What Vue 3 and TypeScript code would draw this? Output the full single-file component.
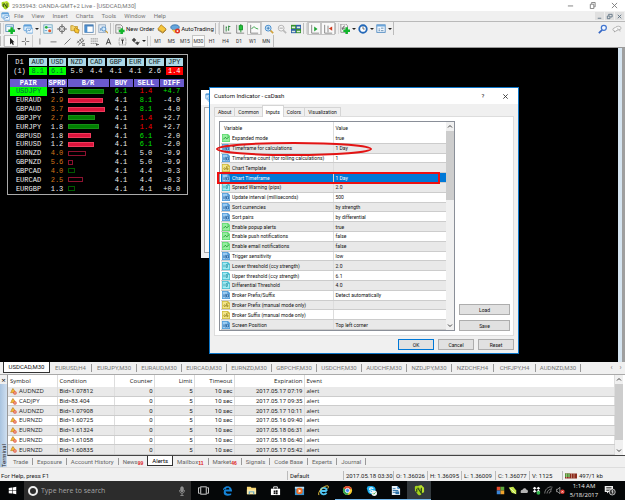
<script setup lang="ts">
import { ref } from 'vue'

interface Strength { code: string; value: string; tone: string }
interface Pair { name: string; spread: string; warn: boolean; bar: number; kind: string; buy: string; sell: string; diff: string; buyTone: string; sellTone: string; diffTone: string }
interface Param { kind: string; name: string; value: string }

const menu = ['File', 'View', 'Insert', 'Charts', 'Tools', 'Window', 'Help']
const frames = ['M1', 'M5', 'M15', 'M30', 'H1', 'H4', 'D1', 'W1', 'MN']
const frame = ref('M30')

const strengths: Strength[] = [
  { code: 'AUD', value: '8.1', tone: 'up' },
  { code: 'USD', value: '6.1', tone: 'up' },
  { code: 'NZD', value: '5.0', tone: '' },
  { code: 'CAD', value: '4.4', tone: '' },
  { code: 'GBP', value: '4.1', tone: '' },
  { code: 'EUR', value: '4.1', tone: '' },
  { code: 'CHF', value: '2.6', tone: '' },
  { code: 'JPY', value: '1.4', tone: 'down' },
]

const pair = (name: string, spread: string, warn: boolean, bar: number, kind: string, buy: string, sell: string, diff: string, buyTone = '', sellTone = '', diffTone = ''): Pair =>
  ({ name, spread, warn, bar, kind, buy, sell, diff, buyTone, sellTone, diffTone })

const pairs: Pair[] = [
  pair('USDJPY', '1.3', false, 36, 'green', '6.1', '1.4', '+4.7', 'g', 'r', 'g'),
  pair('EURAUD', '2.9', true, 35, 'red', '4.1', '8.1', '-4.0', '', 'g'),
  pair('GBPAUD', '3.7', true, 37, 'red', '4.1', '8.1', '-4.0', '', 'g'),
  pair('GBPJPY', '2.7', true, 27, 'green', '4.1', '1.4', '+2.7', '', 'r'),
  pair('EURJPY', '1.8', false, 31, 'green', '4.1', '1.4', '+2.7', '', 'r'),
  pair('GBPUSD', '1.8', false, 23, 'red', '4.1', '6.1', '-2.0', '', 'g'),
  pair('EURUSD', '1.2', false, 26, 'red', '4.1', '6.1', '-2.0', '', 'g'),
  pair('EURNZD', '4.0', true, 18, 'red hollow', '4.1', '5.0', '-0.9'),
  pair('GBPNZD', '5.6', true, 5, 'red hollow', '4.1', '5.0', '-0.9'),
  pair('GBPCAD', '4.0', true, 7, 'green hollow', '4.1', '4.4', '-0.3'),
  pair('EURCAD', '2.5', true, 15, 'red hollow', '4.1', '4.4', '-0.3'),
  pair('EURGBP', '1.3', false, 7, 'green hollow', '4.1', '4.1', '+0.0'),
]

const dialogTabs = ['About', 'Common', 'Inputs', 'Colors', 'Visualization']
const dialogTab = ref('Inputs')

const params: Param[] = [
  { kind: 'bool', name: 'Expanded mode', value: 'true' },
  { kind: 'int', name: 'Timeframe for calculations', value: '1 Day' },
  { kind: 'int', name: 'Timeframe count (for rolling calculations)', value: '1' },
  { kind: 'str', name: 'Chart Template', value: '' },
  { kind: 'int', name: 'Chart Timeframe', value: '1 Day' },
  { kind: 'real', name: 'Spread Warning (pips)', value: '2.0' },
  { kind: 'int', name: 'Update interval (milliseconds)', value: '500' },
  { kind: 'int', name: 'Sort currencies', value: 'by strength' },
  { kind: 'int', name: 'Sort pairs', value: 'by differential' },
  { kind: 'bool', name: 'Enable popup alerts', value: 'true' },
  { kind: 'bool', name: 'Enable push notifications', value: 'false' },
  { kind: 'bool', name: 'Enable email notifications', value: 'false' },
  { kind: 'int', name: 'Trigger sensitivity', value: 'low' },
  { kind: 'real', name: 'Lower threshold (ccy strength)', value: '2.0' },
  { kind: 'real', name: 'Upper threshold (ccy strength)', value: '6.1' },
  { kind: 'real', name: 'Differential Threshold', value: '4.0' },
  { kind: 'int', name: 'Broker Prefix/Suffix', value: 'Detect automatically' },
  { kind: 'str', name: 'Broker Prefix (manual mode only)', value: '' },
  { kind: 'str', name: 'Broker Suffix (manual mode only)', value: '' },
  { kind: 'int', name: 'Screen Position', value: 'Top left corner' },
]
const selected = ref('Chart Timeframe')

const charts = ['USDCAD,M30', 'EURUSD,H4', 'EURJPY,M30', 'EURAUD,M30', 'EURCAD,M30', 'EURNZD,M30', 'GBPCHF,M30', 'USDCHF,M30', 'AUDCHF,M30', 'NZDJPY,M30', 'NZDCHF,H4', 'CHFJPY,H4', 'AUDNZD,M30']
const chart = ref('USDCAD,M30')

const alerts = [
  ['AUDNZD', 'Bid>1.07812', '2017.05.17 07:19'],
  ['CADJPY', 'Bid>83.404', '2017.05.17 09:35'],
  ['AUDNZD', 'Bid>1.07908', '2017.05.17 10:11'],
  ['EURNZD', 'Bid>1.60725', '2017.05.16 09:40'],
  ['EURNZD', 'Bid>1.61324', '2017.05.18 06:31'],
  ['EURNZD', 'Bid>1.61058', '2017.05.18 06:40'],
  ['EURNZD', 'Bid>1.60835', '2017.05.17 05:42'],
]

const panes = [
  { name: 'Trade', count: '' }, { name: 'Exposure', count: '' }, { name: 'Account History', count: '' },
  { name: 'News', count: '99' }, { name: 'Alerts', count: '' }, { name: 'Mailbox', count: '11' },
  { name: 'Market', count: '46' }, { name: 'Signals', count: '' }, { name: 'Code Base', count: '' },
  { name: 'Experts', count: '' }, { name: 'Journal', count: '' },
]
const pane = ref('Alerts')
const query = ref('')

const watchTools = ['market', 'target', 'folder', 'navigator', 'tester']
const drawTools = ['vline', 'hline', 'trend', 'channel', 'fibo', 'text', 'label']
const apps = ['edge', 'explorer', 'store', 'player', 'ie', 'chrome', 'skype', 'writer', 'oanda']
const tray = ['flag', 'leaf', 'cloud', 'dropbox', 'wifi', 'mute']
</script>

<template>
  <div class="screen">
    <svg class="defs" aria-hidden="true">
      <symbol id="oanda" viewBox="0 0 12 12"><path d="M1 8V4L4 1l4 5v3l3-1V3L8 0 1 2z" fill="#b8e02c" /><path d="M1 2c2-2 3-1 4 0l4 6c-1 4-3 4-5 2L1 6z" fill="#a4d41c" /><path d="M3 4v4M4 3l4 6V3" fill="none" stroke="#2e4716" stroke-width="1.3" /></symbol>
      <symbol id="chartwin" viewBox="0 0 12 12"><rect x="1" y="1" width="9" height="7" rx="1" fill="#d8ecfc" stroke="#5e9fd8" /><path d="M1 2h9" stroke="#5e9fd8" stroke-width="2" /><rect x="4" y="5" width="8" height="6" rx="1" fill="#eef7ff" stroke="#5e9fd8" /><path d="M5 9l2-2 1 1 2-2" fill="none" stroke="#3473b5" /></symbol>
      <symbol id="newchart" viewBox="0 0 12 12"><rect x="1" y="1" width="9" height="8" fill="#f4fbff" stroke="#4f86b5" /><path d="M2 3h7" stroke="#7ab3dd" /><path d="M8 4v8M4 8h8" stroke="#11b62b" stroke-width="3" /></symbol>
      <symbol id="market" viewBox="0 0 12 12"><rect x="1" y="1" width="10" height="10" fill="#eef7fb" stroke="#6aa3bd" /><circle cx="4" cy="4" r="1.700" fill="#27ae3e" /><circle cx="8" cy="8" r="1.800" fill="#e2572b" /><path d="M6 4h4M2 8h3" stroke="#4b91c8" /></symbol>
      <symbol id="target" viewBox="0 0 12 12"><circle cx="6" cy="6" r="3.500" fill="none" stroke="#555" /><path d="M6 0v5M6 7v5M0 6h5M7 6h5" stroke="#555" /></symbol>
      <symbol id="folder" viewBox="0 0 12 12"><path d="M1 2h3l1 1h4v5H1z" fill="#f3d269" stroke="#c39a2f" /><path d="M5 6l2-2 1 2 3 1-1 4-4-1z" fill="#f7c531" stroke="#b8871c" /></symbol>
      <symbol id="navigator" viewBox="0 0 12 12"><rect x="1" y="1" width="10" height="9" fill="#fff" stroke="#4a7fb5" /><path d="M1 2h10" stroke="#4a7fb5" stroke-width="2" /><rect x="1" y="2" width="3" height="8" fill="#4d8fd0" /></symbol>
      <symbol id="tester" viewBox="0 0 12 12"><rect x="1" y="1" width="8" height="9" fill="#e6eef6" stroke="#8aa3bd" /><path d="M3 8V5M5 8V3" stroke="#6d93bd" /><circle cx="7" cy="6" r="2.500" fill="#d3ebfa" stroke="#4486c6" /><path d="M9 8l3 3" stroke="#c99a35" stroke-width="1.500" /></symbol>
      <symbol id="order" viewBox="0 0 12 12"><path d="M1 1h6l2 2v8H1z" fill="#f5f5f5" stroke="#777" /><path d="M3 4h4M3 6h3" stroke="#888" /><path d="M8 5v7M4.500 8.500h7" stroke="#12b52c" stroke-width="3" /></symbol>
      <symbol id="gold" viewBox="0 0 12 12"><path d="M1 6l4-5 6 5-4 4z" fill="#f6c63c" stroke="#b5831d" /><path d="M1 7l6 4 4-4" fill="none" stroke="#9d6f16" /></symbol>
      <symbol id="auto" viewBox="0 0 12 12"><ellipse cx="6" cy="4" rx="5" ry="3" fill="#64a6dd" stroke="#3470a8" /><path d="M2 7l4 4 4-4z" fill="#f0c340" /><circle cx="9" cy="8.500" r="3" fill="#e02e20" /><path d="M8 7.500h2v2H8z" fill="#fff" /></symbol>
      <symbol id="bars" viewBox="0 0 12 12"><path d="M2 1v10h9" fill="none" stroke="#777" /><path d="M5 3v6M8 2v6" stroke="#177d2a" /><path d="M5 4h1M8 3h2M7 7h1" stroke="#177d2a" /></symbol>
      <symbol id="candles" viewBox="0 0 12 12"><path d="M2 1v10h9" fill="none" stroke="#777" /><path d="M7 0v10" stroke="#0c8d20" /><rect x="5" y="2" width="4" height="5" fill="#22c23a" stroke="#0c8d20" /></symbol>
      <symbol id="line" viewBox="0 0 12 12"><path d="M2 1v10h9" fill="none" stroke="#777" /><path d="M3 6c2-3 4-3 5-1l3 1" fill="none" stroke="#1d9a31" /></symbol>
      <symbol id="zoomin" viewBox="0 0 12 12"><path d="M7 7l4 4" stroke="#d1a23b" stroke-width="2" /><circle cx="5" cy="5" r="3.500" fill="#d9f0ff" stroke="#2f7cc4" /><path d="M3 5h4M5 3v4" stroke="#2a6dad" /></symbol>
      <symbol id="zoomout" viewBox="0 0 12 12"><path d="M7 7l4 4" stroke="#bbb" stroke-width="2" /><circle cx="5" cy="5" r="3.500" fill="#f4f4f4" stroke="#aaa" /><path d="M3 5h4" stroke="#999" /></symbol>
      <symbol id="tile" viewBox="0 0 12 12"><rect x="0" y="1" width="6" height="5" fill="#35912f" /><rect x="6" y="1" width="6" height="5" fill="#2d5fa6" /><rect x="0" y="6" width="6" height="5" fill="#2d5fa6" /><rect x="6" y="6" width="6" height="5" fill="#35912f" /><path d="M1 4h4M7 4h4M1 9h4M7 9h4" stroke="#dfeedd" stroke-width="2" /></symbol>
      <symbol id="scroll" viewBox="0 0 12 12"><path d="M2 1v10h9" fill="none" stroke="#777" /><path d="M5 3l4 3-4 3z" fill="#1fa534" /></symbol>
      <symbol id="shift" viewBox="0 0 12 12"><path d="M2 1v10h9M6 2v8" fill="none" stroke="#777" /><path d="M11 3L7 5.500 11 8z" fill="#d13a1e" /></symbol>
      <symbol id="indicator" viewBox="0 0 12 12"><path d="M1 0h6l2 2v8H1z" fill="#f4f4f4" stroke="#888" /><path d="M3 7c1-5 2-5 3-4M2 5h4" fill="none" stroke="#555" /><path d="M8 4v8M4 8h8" stroke="#12b52c" stroke-width="3" /></symbol>
      <symbol id="clock" viewBox="0 0 12 12"><circle cx="6" cy="6" r="4.500" fill="#fff" stroke="#2368b8" stroke-width="2.200" /><path d="M6 3v3h2" fill="none" stroke="#555" /></symbol>
      <symbol id="template" viewBox="0 0 12 12"><rect x="1" y="1" width="10" height="9" fill="#f1f8ff" stroke="#4684bf" /><path d="M1 2h10" stroke="#69a5da" stroke-width="2" /><path d="M3 6h2M6 5h3M3 8h2M6 8h3" stroke="#567fa5" /></symbol>
      <symbol id="cursor" viewBox="0 0 12 12"><path d="M4 1v9l2-2 2 3 1-1-1-3h2z" fill="#222" /></symbol>
      <symbol id="cross" viewBox="0 0 12 12"><path d="M6 1v4M6 7v4M1 6h4M7 6h4" stroke="#555" /></symbol>
      <symbol id="vline" viewBox="0 0 12 12"><path d="M6.500 2v8" stroke="#666" /></symbol>
      <symbol id="hline" viewBox="0 0 12 12"><path d="M2 6.500h8" stroke="#555" /></symbol>
      <symbol id="trend" viewBox="0 0 12 12"><path d="M2 10l8-8" stroke="#555" /></symbol>
      <symbol id="channel" viewBox="0 0 12 12"><path d="M1 8l7-6M3 11l8-7M2 5l3 4M5 3l3 5M8 1l2 5" stroke="#555" stroke-width=".9" /><path d="M8 9h4M8 11h4" stroke="#444" /></symbol>
      <symbol id="fibo" viewBox="0 0 12 12"><path d="M1 2.500h10M1 5.500h10M1 8.500h7" stroke="#777" stroke-dasharray="2 .5" /><path d="M9 8v4M8 10h4" stroke="#444" /></symbol>
      <symbol id="text" viewBox="0 0 12 12"><path d="M3 10l3-8 3 8M4 7.500h4" fill="none" stroke="#444" stroke-width="1.300" /></symbol>
      <symbol id="label" viewBox="0 0 12 12"><rect x="1.500" y="1.500" width="9" height="9" fill="none" stroke="#666" stroke-dasharray="1 1" /><path d="M4 4h4M6 4v5" stroke="#333" stroke-width="1.300" /></symbol>
      <symbol id="arrows" viewBox="0 0 12 12"><path d="M1 4l3-3 3 3-3 3zM6 8l2-2 2 1 2-1-3 5z" fill="#444" /><path d="M4 6l4 4" stroke="#444" /></symbol>
      <symbol id="find" viewBox="0 0 12 12"><path d="M5 7l-4 4" stroke="#3566c4" stroke-width="2" /><circle cx="7" cy="4.500" r="3" fill="#f2f7ff" stroke="#4175cf" stroke-width="1.500" /></symbol>
      <symbol id="chat" viewBox="0 0 16 12"><ellipse cx="10" cy="4.500" rx="4.500" ry="3" fill="#f4f4f4" stroke="#999" /><path d="M5 4c-4 0-5 5-1 5v2l2-2c4 0 4-3 3-4" fill="#fafafa" stroke="#888" /><path d="M12 7l1 3" stroke="#999" /></symbol>
      <symbol id="bell" viewBox="0 0 12 12"><path d="M1 8c2-1 1-6 4-6s3 4 4 6z" fill="#f2b632" stroke="#b97d19" /><circle cx="5" cy="1.500" r="1" fill="#c98b20" /><circle cx="8.500" cy="8.500" r="3" fill="#e2553a" /><path d="M7 8.500h3" stroke="#fff" stroke-width="1.200" /></symbol>
      <symbol id="bool" viewBox="0 0 12 12"><path d="M0 0h9l3 3v9H0z" fill="#5fd970" /><path d="M1 1h7v3h3v7H1z" fill="#95ef9f" /><path d="M2 8l3-3 2 2 3-2" fill="none" stroke="#178a2b" stroke-width="1.300" /></symbol>
      <symbol id="int" viewBox="0 0 12 12"><path d="M0 0h9l3 3v9H0z" fill="#4e9ad8" /><path d="M1 1h7v3h3v7H1z" fill="#9dcdf3" /><path d="M3 5v4M5 5h1.500v4H5M8 5h1.500v4H8M5 7h1.500" fill="none" stroke="#14508f" stroke-width="1.200" /></symbol>
      <symbol id="real" viewBox="0 0 12 12"><path d="M0 0h9l3 3v9H0z" fill="#43bccf" /><path d="M1 1h7v3h3v7H1z" fill="#a2ecf4" /><path d="M3 4v4M6 4h2v4H6z" fill="none" stroke="#1b8494" /></symbol>
      <symbol id="str" viewBox="0 0 12 12"><path d="M0 0h9l3 3v9H0z" fill="#cdb83a" /><path d="M1 1h7v3h3v7H1z" fill="#f3e68a" /><circle cx="4" cy="7" r="1.300" fill="none" stroke="#8a760f" /><path d="M7 3v5M7 6h2v2.500H7" fill="none" stroke="#8a760f" /></symbol>
      <symbol id="windows" viewBox="0 0 12 12"><path d="M1 2.500L5.500 2v3.600H1zM6.200 1.900L11 1v4.600H6.200zM1 6.300h4.500V10L1 9.500zM6.200 6.300H11V11l-4.800-.9z" fill="#fff" /></symbol>
      <symbol id="mic" viewBox="0 0 12 12"><rect x="4.500" y="1" width="3" height="6" rx="1.500" fill="#888" stroke="#999" /><path d="M3 5c0 5 6 5 6 0M6 9v2.500M4 11.500h4" fill="none" stroke="#999" /></symbol>
      <symbol id="taskview" viewBox="0 0 12 12"><rect x="3" y="2" width="6" height="8" fill="none" stroke="#ddd" /><path d="M2 3H.5v6H2M10 3h1.500v6H10" fill="none" stroke="#ddd" /></symbol>
      <symbol id="edge" viewBox="0 0 12 12"><path d="M1 6c0-6 10-7 10 1H4c0 3 4 3 6 2v2C5 13 1 11 2 7c0-2 2-3 3-3-3 0-4 2-4 2zm3-1h4c0-3-4-2-4 0z" fill="#1584d8" /></symbol>
      <symbol id="explorer" viewBox="0 0 12 12"><path d="M1 2h4l1 1h5v7H1z" fill="#f7d774" /><path d="M1 5h10v5H1z" fill="#fbe9a8" /><path d="M3 10V7h6v3H8V8H4v2z" fill="#3d97cf" /></symbol>
      <symbol id="store" viewBox="0 0 12 12"><path d="M1 4h10v7H1z" fill="#fff" /><path d="M4 4V2h4v2" fill="none" stroke="#fff" /><path d="M4 6h1.800v1.600H4zM6.300 5.800H8.300v1.800h-2zM4 8h1.800v1.700H4zM6.300 8h2v2h-2z" fill="#111" /></symbol>
      <symbol id="player" viewBox="0 0 12 12"><rect x="1" y="2" width="10" height="9" fill="#3a94d0" /><rect x="1" y="2" width="10" height="2" fill="#bfdcec" /><circle cx="6" cy="6.500" r="3.500" fill="#ef6b21" /><path d="M5 4.500l3 2-3 2z" fill="#fff" /></symbol>
      <symbol id="ie" viewBox="0 0 12 12"><path d="M9.500 6.500H4M9.500 6.500C9.500 2 3 2 3 6.500S8 11 9.300 8.500" fill="none" stroke="#4fc3f0" stroke-width="2" /><path d="M1 11C-1 8 6 0 11 1c1 1 0 2-.5 3" fill="none" stroke="#f4cf45" /></symbol>
      <symbol id="chrome" viewBox="0 0 12 12"><circle cx="6" cy="6" r="5" fill="#f5c92c" /><path d="M6 6L1.700 3.500A5 5 0 0 1 10.500 4z" fill="#df4636" /><path d="M6 6L1.700 3.500A5 5 0 0 0 6 11l2-4z" fill="#31a452" /><circle cx="6" cy="6" r="2.300" fill="#4a8af4" stroke="#fff" /></symbol>
      <symbol id="skype" viewBox="0 0 12 12"><circle cx="6" cy="5.500" r="4.500" fill="#19aef0" /><circle cx="3.500" cy="3.500" r="2.500" fill="#19aef0" /><path d="M8 4C6 2.500 4 3 4 4.500S8 5.500 8 7 5 8.500 4 7" fill="none" stroke="#fff" stroke-width="1.200" /><circle cx="9" cy="9" r="3" fill="#f4f4f4" /><path d="M7.500 9l1 1 2-2" fill="none" stroke="#45b648" /></symbol>
      <symbol id="writer" viewBox="0 0 12 12"><path d="M2 1h6l3 3v7H2z" fill="#e8f1f8" /><path d="M8 1l3 3H8z" fill="#2a7fc0" /><path d="M3 4h3M3 6h6M3 8h6" stroke="#2a6fa6" /><rect x="6" y="7" width="4" height="3" fill="#2a6fa6" /></symbol>
      <symbol id="flag" viewBox="0 0 12 12"><path d="M1 1h5v5H1z" fill="#e54b2e" /><path d="M6 1h5v5H6z" fill="#5fa83a" /><path d="M1 6h5v5H1z" fill="#3a86d8" /><path d="M6 6h5v5H6z" fill="#f0a22b" /></symbol>
      <symbol id="leaf" viewBox="0 0 12 12"><path d="M1 2l6-1 4 5v5l-6-2z" fill="#c4e64a" /><path d="M3 3l7 7" stroke="#f6fbdc" /></symbol>
      <symbol id="cloud" viewBox="0 0 14 12"><path d="M1 8c0-3 3-3 3-3 1-4 6-3 6 0 3 0 3 4 1 5H3C1 10 1 9 1 8z" fill="#b3b3b3" /></symbol>
      <symbol id="dropbox" viewBox="0 0 12 12"><path d="M3.500 1L6 3 3.500 5 1 3zM8.500 1L11 3 8.500 5 6 3zM3.500 5L6 7 3.500 9 1 7zM8.500 5L11 7 8.500 9 6 7z" fill="#fff" /><circle cx="8.500" cy="9" r="2.500" fill="#32b44a" /></symbol>
      <symbol id="wifi" viewBox="0 0 12 12"><path d="M1 10C1 5 5 1 10 1M4 10c0-3 3-6 6-6M7 10c0-2 1-3 3-3" fill="none" stroke="#999" /><path d="M8 9l3-8" stroke="#777" /></symbol>
      <symbol id="mute" viewBox="0 0 14 12"><path d="M1 4h2l3-3v10L3 8H1z" fill="none" stroke="#ddd" /><circle cx="10" cy="8" r="3.500" fill="#e33229" /><path d="M8.500 6.500l3 3M11.500 6.500l-3 3" stroke="#fff" /></symbol>
      <symbol id="note" viewBox="0 0 16 14"><path d="M1 1h11v8H6l-2 2V9H1z" fill="#eee" /><path d="M3 3h7M3 5h7M3 7h4" stroke="#333" /><circle cx="11" cy="9" r="4" fill="#333" stroke="#ddd" /><path d="M10 8l1.500-1v4" fill="none" stroke="#fff" /></symbol>
      <symbol id="traffic" viewBox="0 0 24 12"><path d="M0 1h24v10H0z" fill="#8c2a1c" /><path d="M0 1h10v7H0z" fill="#4f9a35" /><path d="M3 1v10M8 1v10M13 1v10M18 1v10" stroke="#e9d9c9" /></symbol>
    </svg>

    <header class="title">
      <svg class="logo"><use href="#oanda" /></svg>
      <span class="caption">2935943: OANDA-GMT+2 Live - [USDCAD,M30]</span>
      <button class="wc" aria-label="Minimize"><svg viewBox="0 0 8 8"><path d="M1 4.500h6" /></svg></button>
      <button class="wc" aria-label="Restore"><svg viewBox="0 0 8 8"><path d="M1.500 2.500h4v5h-4zM3 2V.5h4v5H6" /></svg></button>
      <button class="wc" aria-label="Close"><svg viewBox="0 0 8 8"><path d="M1 1l6 6M7 1L1 7" /></svg></button>
    </header>

    <nav class="menu">
      <svg class="ic"><use href="#chartwin" /></svg>
      <button v-for="m in menu" :key="m" class="item">{{ m }}</button>
      <span class="grow"></span>
      <button class="mdi" aria-label="Minimize chart"><svg viewBox="0 0 8 8"><path d="M2 6h4" /></svg></button>
      <button class="mdi" aria-label="Restore chart"><svg viewBox="0 0 8 8"><path d="M1.500 3.500h3v3h-3zM3 3V1.500h4v3H5" /></svg></button>
      <button class="mdi" aria-label="Close chart"><svg viewBox="0 0 8 8"><path d="M2 2l4 4M6 2L2 6" /></svg></button>
    </nav>

    <div class="bar top">
      <i class="grip"></i>
      <button class="tb drop" aria-label="New chart"><svg class="ic"><use href="#newchart" /></svg><i class="caret"></i></button>
      <button class="tb drop" aria-label="Profiles"><svg class="ic"><use href="#chartwin" /></svg><i class="caret"></i></button>
      <div class="group five">
        <button v-for="t in watchTools" :key="t" class="tb" :class="{ on: t === 'navigator' }" :aria-label="t"><svg class="ic"><use :href="'#' + t" /></svg></button>
      </div>
      <i class="grip"></i>
      <button class="tb wide"><svg class="ic"><use href="#order" /></svg>New Order</button>
      <button class="tb" aria-label="MetaEditor"><svg class="ic"><use href="#gold" /></svg></button>
      <button class="tb wide"><svg class="ic"><use href="#auto" /></svg>AutoTrading</button>
      <i class="grip"></i>
      <div class="group three">
        <button v-for="t in ['bars', 'candles', 'line']" :key="t" class="tb" :class="{ on: t === 'line' }" :aria-label="t"><svg class="ic"><use :href="'#' + t" /></svg></button>
      </div>
      <div class="group three">
        <button v-for="t in ['zoomin', 'zoomout', 'tile']" :key="t" class="tb" :aria-label="t"><svg class="ic"><use :href="'#' + t" /></svg></button>
      </div>
      <i class="grip"></i>
      <div class="group two">
        <button v-for="t in ['scroll', 'shift']" :key="t" class="tb on" :aria-label="t"><svg class="ic"><use :href="'#' + t" /></svg></button>
      </div>
      <i class="grip"></i>
      <button v-for="t in ['indicator', 'clock', 'template']" :key="t" class="tb drop" :aria-label="t"><svg class="ic"><use :href="'#' + t" /></svg><i class="caret"></i></button>
      <i class="end"></i>
      <span class="grow"></span>
      <button class="tb" aria-label="Search"><svg class="ic"><use href="#find" /></svg></button>
      <button class="tb" aria-label="Chat"><svg class="ic chat"><use href="#chat" /></svg></button>
    </div>

    <div class="bar low">
      <i class="grip"></i>
      <button class="tb on" aria-label="Cursor"><svg class="ic"><use href="#cursor" /></svg></button>
      <button class="tb" aria-label="Crosshair"><svg class="ic"><use href="#cross" /></svg></button>
      <div class="group seven">
        <button v-for="t in drawTools" :key="t" class="tb" :aria-label="t"><svg class="ic"><use :href="'#' + t" /></svg></button>
      </div>
      <button class="tb drop" aria-label="Arrows"><svg class="ic"><use href="#arrows" /></svg><i class="caret"></i></button>
      <i class="grip"></i>
      <div class="group nine">
        <button v-for="f in frames" :key="f" class="tb frame" :class="{ on: f === frame }" @click="frame = f">{{ f }}</button>
      </div>
      <i class="end"></i>
    </div>

    <main class="work">
      <div class="canvas">
        <section class="dash">
          <table class="strength">
            <tbody>
              <tr><td>D1</td><th v-for="s in strengths" :key="s.code"><span>{{ s.code }}</span></th></tr>
              <tr><td>(1)</td><td v-for="s in strengths" :key="s.code"><span :class="s.tone">{{ s.value }}</span></td></tr>
            </tbody>
          </table>
          <table class="pairs">
            <colgroup><col class="c1"><col class="c2"><col class="c3"><col class="c4"><col class="c5"><col class="c6"></colgroup>
            <thead><tr><th>PAIR</th><th>SPRD</th><th>B/R</th><th>BUY</th><th>SELL</th><th>DIFF</th></tr></thead>
            <tbody>
              <tr v-for="(p, i) in pairs" :key="p.name">
                <td :class="{ hot: i === 0 }">{{ p.name }}</td>
                <td :class="{ warn: p.warn }">{{ p.spread }}</td>
                <td class="cell"><i class="meter" :class="p.kind" :style="{ width: p.bar + 'px' }"></i></td>
                <td :class="p.buyTone">{{ p.buy }}</td>
                <td :class="p.sellTone">{{ p.sell }}</td>
                <td :class="p.diffTone">{{ p.diff }}</td>
              </tr>
            </tbody>
          </table>
        </section>
      </div>

      <div class="behind"><div class="behind-top"><svg class="ic"><use href="#chartwin" /></svg></div><div class="behind-in"></div></div>

      <section class="dialog" role="dialog" aria-label="Custom Indicator - csDash">
        <header class="dtitle">
          <span class="grow">Custom Indicator - csDash</span>
          <button class="dc" aria-label="Help">?</button>
          <button class="dc" aria-label="Close"><svg viewBox="0 0 8 8"><path d="M1.500 1.500l5 5M6.500 1.500l-5 5" /></svg></button>
        </header>
        <div class="dtabs" role="tablist">
          <button v-for="t in dialogTabs" :key="t" role="tab" class="dtab" :class="{ active: t === dialogTab }" @click="dialogTab = t">{{ t }}</button>
        </div>
        <div class="page">
          <div class="list">
            <table class="params">
              <colgroup><col class="pv"><col></colgroup>
              <thead><tr><th>Variable</th><th>Value</th></tr></thead>
              <tbody>
                <tr v-for="p in params" :key="p.name" :class="{ sel: p.name === selected }" @click="selected = p.name">
                  <td><span class="pname"><svg><use :href="'#' + p.kind" /></svg>{{ p.name }}</span></td>
                  <td>{{ p.value }}</td>
                </tr>
              </tbody>
            </table>
            <div class="vscroll"><svg viewBox="0 0 8 8"><path d="M2 5l2-2 2 2" /></svg><i class="thumb"></i><span class="grow"></span><svg viewBox="0 0 8 8"><path d="M2 3l2 2 2-2" /></svg></div>
            <svg class="mark oval" viewBox="0 0 158 14" preserveAspectRatio="none"><ellipse cx="79" cy="7" rx="77" ry="6" /></svg>
            <i class="mark box"></i>
          </div>
          <div class="side"><button class="btn">Load</button><button class="btn">Save</button></div>
        </div>
        <footer class="dfoot"><button class="btn ok">OK</button><button class="btn">Cancel</button><button class="btn">Reset</button></footer>
      </section>
      <div class="edge"></div>
    </main>

    <nav class="charts">
      <button v-for="c in charts" :key="c" class="ctab" :class="{ active: c === chart, short: c.endsWith('H4') }" @click="chart = c">{{ c }}</button>
      <span class="grow"></span>
      <span class="step">‹</span><span class="step">›</span>
    </nav>

    <section class="terminal">
      <aside class="rail"><button class="x" aria-label="Close terminal">×</button><div class="strip"><span>Terminal</span></div></aside>
      <div class="tbody">
        <div class="grid">
          <table class="alerts">
            <colgroup><col class="a1"><col class="a2"><col class="a3"><col class="a3"><col class="a3"><col class="a4"><col></colgroup>
            <thead><tr><th>Symbol</th><th>Condition</th><th class="n">Counter</th><th class="n">Limit</th><th class="n">Timeout</th><th class="n">Expiration</th><th>Event</th></tr></thead>
            <tbody>
              <tr v-for="(a, i) in alerts" :key="i">
                <td><span class="sym"><svg><use href="#bell" /></svg>{{ a[0] }}</span></td>
                <td class="s">{{ a[1] }}</td><td class="n s">0</td><td class="n s">5</td><td class="n s">10 sec</td><td class="n s">{{ a[2] }}</td><td>alert</td>
              </tr>
            </tbody>
          </table>
          <div class="vscroll"><svg viewBox="0 0 8 8"><path d="M2 5l2-2 2 2" /></svg><i class="thumb"></i><span class="grow"></span><svg viewBox="0 0 8 8"><path d="M2 3l2 2 2-2" /></svg></div>
        </div>
        <nav class="panes">
          <button v-for="p in panes" :key="p.name" class="ptab" :class="{ active: p.name === pane }" @click="pane = p.name">{{ p.name }}<sub v-if="p.count">{{ p.count }}</sub></button>
        </nav>
      </div>
    </section>

    <footer class="status">
      <span class="grow">For Help, press F1</span>
      <span class="st w1">Default</span><span class="st w2">2017.05.18 03:30</span><span class="st w3">O: 1.36026</span><span class="st w3">H: 1.36095</span><span class="st w3">L: 1.36009</span><span class="st w3">C: 1.36077</span><span class="st w4">V: 1125</span><span class="st w5"><svg><use href="#traffic" /></svg>497/1 kb</span>
    </footer>

    <footer class="taskbar">
      <button class="start" aria-label="Start"><svg><use href="#windows" /></svg></button>
      <label class="search"><i class="ring"></i><input v-model="query" type="text" placeholder="Type here to search" aria-label="Type here to search"><svg><use href="#mic" /></svg></label>
      <button class="app" aria-label="Task view"><svg><use href="#taskview" /></svg></button>
      <button v-for="a in apps" :key="a" class="app" :class="{ run: ['chrome', 'skype', 'writer', 'oanda'].includes(a), cur: a === 'oanda' }" :aria-label="a"><svg><use :href="'#' + a" /></svg></button>
      <span class="grow"></span>
      <svg v-for="t in tray" :key="t" class="tray"><use :href="'#' + t" /></svg>
      <div class="time"><span>1:14 AM</span><span>5/18/2017</span></div>
      <button class="note" aria-label="Notifications"><svg><use href="#note" /></svg></button>
    </footer>
  </div>
</template>

<style>
body { background: #000; overflow: hidden; }
</style>

<style scoped>
.screen { height: 100vh; display: flex; flex-direction: column; font: 6px/10px "Open Sans", "Noto Sans", sans-serif; color: #222; background: #f0f0f0; }
.screen * { box-sizing: border-box; }
.defs { position: absolute; width: 0; height: 0; }
button { font: inherit; color: inherit; background: none; border: 0; padding: 0; margin: 0; display: flex; align-items: center; justify-content: center; white-space: nowrap; }
svg { display: block; flex: none; }
table { border-collapse: collapse; table-layout: fixed; width: 100%; }
td, th { padding: 0; font-weight: 400; white-space: nowrap; overflow: hidden; text-align: left; }
.grow { flex: 1; }
.ic { width: 9px; height: 9px; }

.title, .menu, .bar, .panes { font-family: Roboto, sans-serif; }
.title { height: 11px; display: flex; align-items: center; background: #fff; color: #777; }
.logo { width: 9px; height: 9px; margin: 0 2px 0 1px; }
.caption { flex: 1; }
.wc { width: 22px; height: 11px; }
.wc svg, .mdi svg { width: 7px; height: 7px; fill: none; stroke: #777; }
.menu { height: 11px; display: flex; align-items: center; padding: 0 1px; color: #777; border-bottom: 1px solid #b9b9b9; }
.menu .ic { margin-right: 4px; }
.item { margin-right: 8px; }
.mdi { width: 9px; height: 8px; background: #e0e0e0; margin-left: 1px; }
.mdi svg { stroke: #5d7182; }

.bar { display: flex; align-items: stretch; }
.top { height: 13px; padding-right: 1px; }
.low { height: 13px; border-bottom: 1px solid #999; }
.grip { width: 4px; border-left: 1px solid #bbb; border-right: 1px solid #d8d8d8; margin: 1px 0; flex: none; }
.end { border-left: 1px solid #bbb; }
.tb { width: 14px; flex: none; color: #333; }
.tb.wide { width: auto; gap: 1px; padding: 0 1px; color: #111; }
.tb.drop { width: 18px; gap: 2px; }
.top .tb .ic { width: 10px; height: 10px; }
.tb.on { background: #f9f9f9; border: 1px solid #c4c4c4; }
.caret { border: 2px solid transparent; border-top-color: #222; border-bottom: 0; }
.group { display: grid; grid-auto-flow: column; grid-auto-columns: 1fr; border-left: 1px solid #ccc; flex: none; }
.group .tb { width: auto; }
.five { width: 70px; }
.three { width: 42px; }
.two { width: 28px; }
.seven { width: 97px; }
.nine { width: 122px; border: 0; }
.frame { font-size: 5px; }
.top .chat { width: 13px; }

.work { flex: 1; display: flex; position: relative; min-height: 0; background: #000; }
.canvas { flex: 1; padding: 6px 7px; }
.edge { width: 7px; border-left: 4px solid #d5e4f0; background: #9f9f9f; }
.dash { width: 181px; border: 1px solid #aaa; padding: 2px 2px 1px 2px; font: 7px/8px "Liberation Mono", monospace; color: #eee; }
.dash td, .dash th { text-align: center; }
.strength { margin-bottom: 4px; height: 18px; }
.strength td:first-child { width: 19px; }
.strength span { display: block; margin-right: 2px; }
.strength th span { background: #add8e6; color: #122; }
.strength .up { background: #0f0; color: #063; }
.strength .down { background: #f00; color: #fff; }
.pairs { height: 114px; }
.pairs th { background: #6a5acd; color: #fff; border-right: 1px solid #000; font-weight: 700; }
.c1 { width: 37px; } .c2 { width: 20px; } .c3 { width: 42px; } .c4 { width: 24px; } .c5 { width: 26px; }
.pairs .hot { background: #0f0; color: #064; }
.pairs .warn { color: #d2761a; }
.pairs .g { color: #00e400; }
.pairs .r { color: #f00; }
.meter { display: block; height: 5px; margin-left: 1px; border: 1px solid; }
.meter.green { background: #008000; border-color: #169016; }
.meter.red { background: #dc143c; border-color: #ef3b5c; }
.meter.hollow { background: #000; }
.meter.red.hollow { border-color: #8d1230; }
.meter.green.hollow { border-color: #005a00; }

.behind { position: absolute; left: 201px; top: 42px; width: 60px; height: 168px; background: #f0f0f0; padding: 0 3px 5px 3px; display: flex; flex-direction: column; }
.behind-top { height: 15px; background: #fff; margin: 0 -3px 2px; padding: 3px 4px; }
.behind-in { flex: 1; border: 1px solid #aaa; background: #fafafa; }

.dialog { position: absolute; left: 209px; top: 39px; width: 310px; background: #f0f0f0; border: 1px solid #0d76c8; padding: 0 4px 3px; color: #111; font-size: 5px; font-family: Roboto, sans-serif; }
.dtitle { height: 16px; margin: 0 -4px; padding: 0 2px 0 4px; background: #fff; display: flex; align-items: center; font-size: 6px; }
.dc { width: 22px; height: 12px; }
.dc svg { width: 7px; height: 7px; fill: none; stroke: #333; }
.dtabs { display: flex; align-items: flex-end; height: 12px; padding-top: 1px; }
.dtab { height: 9px; padding: 0 3px; border: 1px solid #d5d5d5; border-bottom: 0; margin-right: -1px; }
.dtab.active { height: 12px; background: #fff; margin-bottom: -1px; }
.page { background: #fff; border: 1px solid #ddd; padding: 4px 3px 4px 4px; display: flex; gap: 4px; }
.list { flex: 1; display: flex; position: relative; border: 1px solid #8a8f98; padding-left: 1px; }
.params { flex: 1; height: 208px; line-height: 8px; }
.params thead tr { height: 12px; }
.params th { padding-left: 3px; }
.pv { width: 112px; }
.params td { border-bottom: 1px solid #ccc; padding-left: 1px; }
.params td + td, .params th + th { border-left: 1px solid #ddd; padding-left: 2px; }
.params tbody tr:nth-child(even) { background: #e9e9e9; }
.params tbody tr.sel { background: #0078d7; color: #fff; }
.pname { display: flex; align-items: center; gap: 2px; }
.pname svg { width: 8px; height: 8px; }
.vscroll { width: 8px; background: #f0f0f0; display: flex; flex-direction: column; }
.vscroll svg { width: 8px; height: 9px; fill: none; stroke: #444; }
.thumb { background: #cdcdcd; height: 69px; }
.mark { position: absolute; }
.oval { left: -5px; top: 20px; width: 158px; height: 14px; fill: none; stroke: #e31414; stroke-width: 2px; overflow: visible; }
.box { left: -3px; top: 50px; right: 14px; height: 12px; border: 2px solid #ee1010; }
.side { display: flex; flex-direction: column; justify-content: flex-end; gap: 5px; width: 51px; }
.btn { height: 11px; background: #e1e1e1; border: 1px solid #adadad; }
.dfoot { display: flex; justify-content: flex-end; gap: 4px; padding-top: 3px; }
.dfoot .btn { width: 36px; }
.dfoot .ok { border: 1px solid #0078d7; }

.charts { height: 13px; display: flex; align-items: center; padding-left: 3px; border-bottom: 1px solid #aaa; color: #777; font-family: Roboto, sans-serif; }
.ctab { width: 45px; height: 8px; border-right: 1px solid #999; }
.ctab.short { width: 42px; }
.ctab.active { height: 11px; width: 47px; border: 1px solid #333; border-top: 0; background: #fff; color: #111; align-self: flex-start; }
.step { width: 9px; text-align: center; font-size: 7px; }

.terminal { display: flex; }
.rail { width: 7px; display: flex; flex-direction: column; }
.x { height: 9px; font-size: 8px; color: #111; }
.strip { flex: 1; background: linear-gradient(90deg, #a9c4e0, #cfdff0); display: flex; align-items: flex-end; }
.strip span { writing-mode: vertical-rl; transform: rotate(180deg); line-height: 7px; font-family: Roboto, sans-serif; }
.tbody { flex: 1; min-width: 0; }
.grid { display: flex; background: #fff; border-bottom: 1px solid #444; border-left: 1px solid #999; padding-right: 2px; }
.alerts { flex: 1; height: 80px; line-height: 8px; }
.alerts thead tr { height: 12px; }
.alerts th, .alerts td { border-right: 1px solid #ddd; padding: 0 1px 0 2px; }
.alerts td { border-bottom: 1px solid #ccc; }
.alerts tbody tr:nth-child(odd) { background: #e9e9e9; }
.alerts .n { text-align: right; }
.alerts .s { font-family: Roboto, sans-serif; }
.a1 { width: 49px; } .a2 { width: 57px; } .a3 { width: 40px; } .a4 { width: 70px; }
.sym { display: flex; align-items: center; gap: 2px; }
.sym svg { width: 7px; height: 7px; }
.grid .thumb { height: 56px; }
.panes { height: 11px; display: flex; align-items: center; padding-left: 2px; color: #666; }
.ptab { height: 7px; padding: 0 4px; border-right: 1px solid #999; }
.ptab.active { height: 10px; border: 1px solid #333; border-top: 0; background: #fff; color: #000; align-self: flex-start; margin-left: -1px; }
.ptab sub { color: #d22; font: 700 5px/5px "Liberation Sans", sans-serif; padding-top: 3px; }

.status { height: 14px; display: flex; align-items: center; padding: 2px 2px 0 1px; border-top: 1px solid #ddd; font-family: Roboto, sans-serif; }
.st { border-left: 1px solid #bbb; padding-left: 2px; line-height: 9px; white-space: nowrap; display: flex; align-items: center; gap: 2px; }
.st svg { width: 12px; height: 6px; }
.w1 { width: 56px; } .w2 { width: 50px; } .w3 { width: 34px; } .w4 { width: 33px; } .w5 { width: 61px; }

.taskbar { height: 19px; display: flex; align-items: stretch; background: #050708; color: #eee; }
.taskbar svg { width: 11px; height: 11px; }
.start { width: 24px; }
.start svg { width: 9px; height: 9px; }
.search { width: 167px; background: #2c2c2c; display: flex; align-items: center; padding: 0 4px; gap: 3px; }
.ring { width: 10px; height: 10px; border: 2px solid #eee; border-radius: 50%; }
.search input { flex: 1; min-width: 0; border: 0; padding: 0; background: none; outline: 0; font: 7px/10px "Open Sans", sans-serif; color: #ddd; }
.search input::placeholder { color: #a5a5a5; opacity: 1; }
.search svg { width: 10px; height: 10px; }
.app { width: 24px; }
.app.run { border-bottom: 1px solid #76b9ed; }
.app.cur { background: #33393d; }
.taskbar .tray { width: 9px; height: 9px; margin-right: 3px; align-self: center; }
.time { width: 32px; display: flex; flex-direction: column; justify-content: center; text-align: center; line-height: 9px; }
.note { width: 20px; margin-right: 5px; }
.taskbar .note svg { width: 12px; }
</style>
